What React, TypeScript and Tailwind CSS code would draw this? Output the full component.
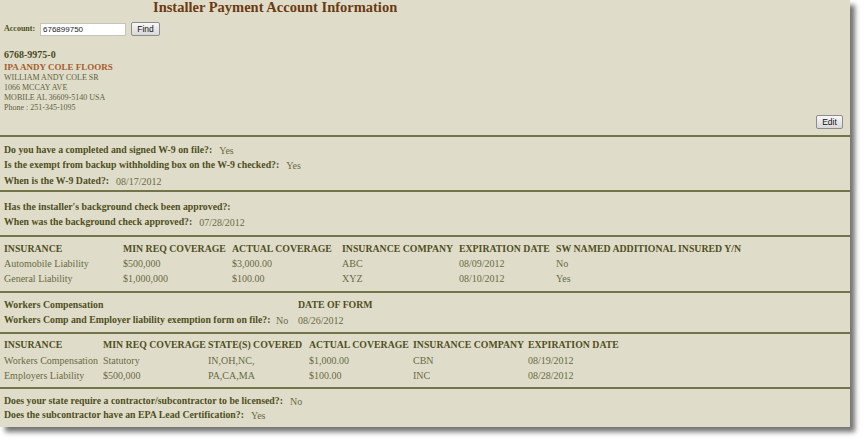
import React from "react";

const serif = "font-['Liberation_Serif','Times_New_Roman',serif]";
const sans = "font-['Liberation_Sans',Arial,sans-serif]";

const label = "font-bold text-[9.8px] text-[#4f4f22]";
const value = "text-[#6a6a44]";

type QA = { q: string; a?: string; h: string };

const Row = ({ q, a, h }: QA) => (
  <div className={`flex ${h} items-center whitespace-nowrap`}>
    <span className={label}>{q}</span>
    {a ? <span className={`${value} ml-[7px]`}>{a}</span> : null}
  </div>
);

const insurance = [
  ["Automobile Liability", "$500,000", "$3,000.00", "ABC", "08/09/2012", "No"],
  ["General Liability", "$1,000,000", "$100.00", "XYZ", "08/10/2012", "Yes"],
];

const workers = [
  ["Workers Compensation", "Statutory", "IN,OH,NC,", "$1,000.00", "CBN", "08/19/2012"],
  ["Employers Liability", "$500,000", "PA,CA,MA", "$100.00", "INC", "08/28/2012"],
];

export default function App() {
  return (
    <div className={`min-h-screen bg-white ${serif}`}>
      <div className="w-[850px] h-[427px] bg-[#dfddc9] shadow-[5px_5px_5px_rgba(0,0,0,0.55)] text-[10px] overflow-hidden">
        {/* header */}
        <div className="pl-[153px] h-[14px] text-[14.5px] leading-[14px] font-bold text-[#6b3a12] whitespace-nowrap">
          Installer Payment Account Information
        </div>

        <div className="mt-[8px] flex items-center h-[14px] pl-[4px]">
          <span className="font-bold text-[8px] text-[#4f4f22] w-[36px]">Account:</span>
          <div className={`w-[86px] h-[13px] bg-white border border-[#c4c4bc] text-[8px] leading-[11px] pl-[2px] text-[#222] ${sans}`}>
            676899750
          </div>
          <button className={`ml-[5px] w-[29px] h-[14px] rounded-[2px] border border-[#8c8c8c] bg-gradient-to-b from-[#f8f8f8] to-[#d8d8d8] text-[8.5px] leading-[12px] text-[#111] ${sans}`}>
            Find
          </button>
        </div>

        <div className="pl-[4px] pt-[12px]">
          <div className="font-bold text-[10px] leading-[13px] text-[#4a4a22]">6768-9975-0</div>
          <div className="font-bold text-[9px] leading-[12px] text-[#a65c2c]">IPA ANDY COLE FLOORS</div>
          <div className="text-[8px] leading-[10px] text-[#5f5f3a]">
            <div>WILLIAM ANDY COLE SR</div>
            <div>1066 MCCAY AVE</div>
            <div>MOBILE AL 36609-5140 USA</div>
            <div>Phone : 251-345-1095</div>
          </div>
        </div>

        <div className="flex justify-end pr-[7px] pt-[2px] h-[22px]">
          <button className={`w-[27px] h-[14px] rounded-[2px] border border-[#8c8c8c] bg-gradient-to-b from-[#f8f8f8] to-[#d8d8d8] text-[8.5px] leading-[12px] text-[#111] ${sans}`}>
            Edit
          </button>
        </div>

        {/* W-9 */}
        <div className="border-t-2 border-[#74744a] pl-[4px] pt-[7px] pb-[1px]">
          <Row q="Do you have a completed and signed W-9 on file?:" a="Yes" h="h-[13px]" />
          <Row q="Is the exempt from backup withholding box on the W-9 checked?:" a="Yes" h="h-[17px]" />
          <Row q="When is the W-9 Dated?:" a="08/17/2012" h="h-[15px]" />
        </div>

        {/* background */}
        <div className="border-t-2 border-[#74744a] pl-[4px] pt-[7px] pb-[5px]">
          <Row q="Has the installer's background check been approved?:" h="h-[16px]" />
          <Row q="When was the background check approved?:" a="07/28/2012" h="h-[15px]" />
        </div>

        {/* insurance */}
        <div className="border-t-2 border-[#74744a] pl-[4px] pt-[5px] pb-[5.5px] grid grid-cols-[119px_109px_110px_117px_97px_1fr] auto-rows-[14.5px] items-center whitespace-nowrap">
          {["INSURANCE", "MIN REQ COVERAGE", "ACTUAL COVERAGE", "INSURANCE COMPANY", "EXPIRATION DATE", "SW NAMED ADDITIONAL INSURED Y/N"].map((t) => (
            <span key={t} className={label}>{t}</span>
          ))}
          {insurance.map((r) => r.map((c, i) => <span key={r[0] + i} className={value}>{c}</span>))}
        </div>

        {/* workers comp form */}
        <div className="border-t-2 border-[#74744a] pl-[4px] pt-[5px] pb-[4px] grid grid-cols-[272px_22px_1fr] auto-rows-[15px] items-center whitespace-nowrap">
          <span className={label}>Workers Compensation</span>
          <span />
          <span className={label}>DATE OF FORM</span>
          <span className={label}>Workers Comp and Employer liability exemption form on file?:</span>
          <span className={value}>No</span>
          <span className={value}>08/26/2012</span>
        </div>

        {/* workers comp coverage */}
        <div className="border-t-2 border-[#74744a] pl-[4px] pt-[4px] pb-[5px] grid grid-cols-[99px_105px_101px_104px_115px_1fr] auto-rows-[14.8px] items-center whitespace-nowrap">
          {["INSURANCE", "MIN REQ COVERAGE", "STATE(S) COVERED", "ACTUAL COVERAGE", "INSURANCE COMPANY", "EXPIRATION DATE"].map((t) => (
            <span key={t} className={label}>{t}</span>
          ))}
          {workers.map((r) => r.map((c, i) => <span key={r[0] + i} className={value}>{c}</span>))}
        </div>

        {/* license */}
        <div className="border-t-2 border-[#74744a] pl-[4px] pt-[5px]">
          <Row q="Does your state require a contractor/subcontractor to be licensed?:" a="No" h="h-[14px]" />
          <Row q="Does the subcontractor have an EPA Lead Certification?:" a="Yes" h="h-[14px]" />
        </div>
      </div>
    </div>
  );
}
